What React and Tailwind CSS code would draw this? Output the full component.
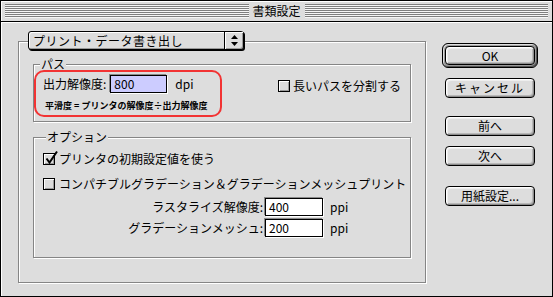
import React from "react";

function Checkbox({ checked }) {
  return (
    <span className="relative inline-block w-[12px] h-[12px] shrink-0 border border-black bg-[#dcdcdc] shadow-[inset_1px_1px_0_#ffffff,inset_-1px_-1px_0_#9a9a9a]">
      {checked && (
        <svg className="absolute left-[-1px] top-[-4px] w-[16px] h-[16px] overflow-visible" viewBox="0 0 16 16">
          <path d="M3.5 8.5 L6.5 12.5 L14 1.5" stroke="#000" strokeWidth="2" fill="none" />
        </svg>
      )}
    </span>
  );
}

function Btn({ children, className }) {
  return (
    <div className={"flex items-center justify-center rounded-[4px] border border-black bg-[#dddddd] shadow-[inset_1px_1px_0_#ffffff,inset_-1px_-1px_0_#8c8c8c,inset_2px_2px_0_#eeeeee,inset_-2px_-2px_0_#b8b8b8] " + className}>
      {children}
    </div>
  );
}

const stripe =
  "flex-1 h-[14px] bg-[repeating-linear-gradient(to_bottom,#7f7f7f_0px,#7f7f7f_1px,#f6f6f6_1px,#f6f6f6_2px)]";

const etched =
  "border border-[#858585] shadow-[1px_1px_0_#ffffff,inset_1px_1px_0_#ffffff]";

export default function App() {
  return (
    <div className="w-[553px] h-[297px] bg-[#dddddd] border border-black flex flex-col text-[12px] leading-[12px] text-black font-['Noto_Sans_CJK_JP','Noto_Sans',sans-serif] overflow-hidden">
      {/* Title bar */}
      <div className="h-[21px] shrink-0 border-b border-black flex items-center px-[4px] gap-[4px] shadow-[inset_1px_1px_0_#ffffff]">
        <div className={stripe} />
        <span className="leading-[14px]">書類設定</span>
        <div className={stripe} />
      </div>

      {/* Content */}
      <div className="flex-1 flex pl-[17px] pt-[19px] shadow-[inset_1px_1px_0_#ffffff]">
        {/* Left outer group */}
        <div className={"w-[408px] h-[242px] shrink-0 flex flex-col " + etched}>
          {/* Popup */}
          <div className="ml-[9px] -mt-[11px] w-[216px] h-[19px] shrink-0 flex rounded-[3px] border border-black bg-[#dddddd] shadow-[1px_1px_0_#000000,inset_1px_1px_0_#ffffff,inset_-1px_-1px_0_#999999]">
            <div className="flex-1 flex items-center pl-[4px] tracking-[0.5px]">プリント・データ書き出し</div>
            <div className="w-[19px] flex items-center justify-center border-l border-black shadow-[inset_1px_1px_0_#ffffff]">
              <svg width="7" height="11" viewBox="0 0 7 11">
                <path d="M0 4 L3.5 0 L7 4 Z" fill="#000" />
                <path d="M0 7 L7 7 L3.5 11 Z" fill="#000" />
              </svg>
            </div>
          </div>

          {/* パス group */}
          <div className={"relative ml-[14px] mt-[14px] w-[378px] h-[58px] shrink-0 flex flex-col " + etched}>
            <span className="-mt-[7px] ml-[6px] px-[1px] w-fit bg-[#dddddd] leading-[12px]">パス</span>
            <div className="absolute left-0 top-[5px] w-[188px] h-[47px] rounded-[10px] border-2 border-[#f23333]" />
            <div className="flex items-center mt-[5px] pl-[9px]">
              <div className="w-[235px] flex items-center">
                <span>出力解像度:</span>
                <div className="ml-[4px] w-[57px] h-[18px] flex items-center pl-[3px] border border-black bg-[#ccccff] shadow-[1px_1px_0_#ffffff,-1px_-1px_0_#8a8a8a]">
                  800
                </div>
                <span className="ml-[8px]">dpi</span>
              </div>
              <div className="flex items-center gap-[3px] mt-[3px]">
                <Checkbox />
                <span>長いパスを分割する</span>
              </div>
            </div>
            <div className="mt-[8px] pl-[11px] text-[9px] leading-[9px] font-bold whitespace-pre">
              平滑度 = プリンタの解像度÷出力解像度
            </div>
          </div>

          {/* オプション group */}
          <div className={"ml-[14px] mt-[15px] w-[378px] h-[121px] shrink-0 flex flex-col " + etched}>
            <span className="-mt-[7px] ml-[12px] px-[1px] w-fit bg-[#dddddd] leading-[12px]">オプション</span>
            <div className="flex items-center gap-[4px] mt-[10px] pl-[9px]">
              <Checkbox checked />
              <span>プリンタの初期設定値を使う</span>
            </div>
            <div className="flex items-center gap-[4px] mt-[13px] pl-[9px]">
              <Checkbox />
              <span>コンパチブルグラデーション＆グラデーションメッシュプリント</span>
            </div>
            <div className="flex items-center mt-[8px]">
              <span className="w-[229px] text-right">ラスタライズ解像度:</span>
              <div className="ml-[2px] w-[58px] h-[18px] flex items-center pl-[3px] border border-black bg-white shadow-[1px_1px_0_#ffffff,-1px_-1px_0_#8a8a8a]">
                400
              </div>
              <span className="ml-[7px]">ppi</span>
            </div>
            <div className="flex items-center mt-[3px]">
              <span className="w-[229px] text-right">グラデーションメッシュ:</span>
              <div className="ml-[2px] w-[58px] h-[18px] flex items-center pl-[3px] border border-black bg-white shadow-[1px_1px_0_#ffffff,-1px_-1px_0_#8a8a8a]">
                200
              </div>
              <span className="ml-[7px]">ppi</span>
            </div>
          </div>
        </div>

        {/* Buttons column */}
        <div className="ml-[16px] w-[96px] flex flex-col">
          <div className="mt-[2px] w-[96px] h-[25px] rounded-[6px] border border-black bg-[#9a9a9a] p-[2px] shadow-[inset_1px_1px_0_#dddddd,inset_-1px_-1px_0_#555555]">
            <Btn className="w-[90px] h-[19px]">OK</Btn>
          </div>
          <Btn className="mt-[10px] ml-[3px] w-[90px] h-[20px] tracking-[2px]">キャンセル</Btn>
          <Btn className="mt-[18px] ml-[3px] w-[90px] h-[20px]">前へ</Btn>
          <Btn className="mt-[10px] ml-[3px] w-[90px] h-[20px]">次へ</Btn>
          <Btn className="mt-[20px] ml-[3px] w-[90px] h-[20px]">用紙設定...</Btn>
        </div>
      </div>
    </div>
  );
}
